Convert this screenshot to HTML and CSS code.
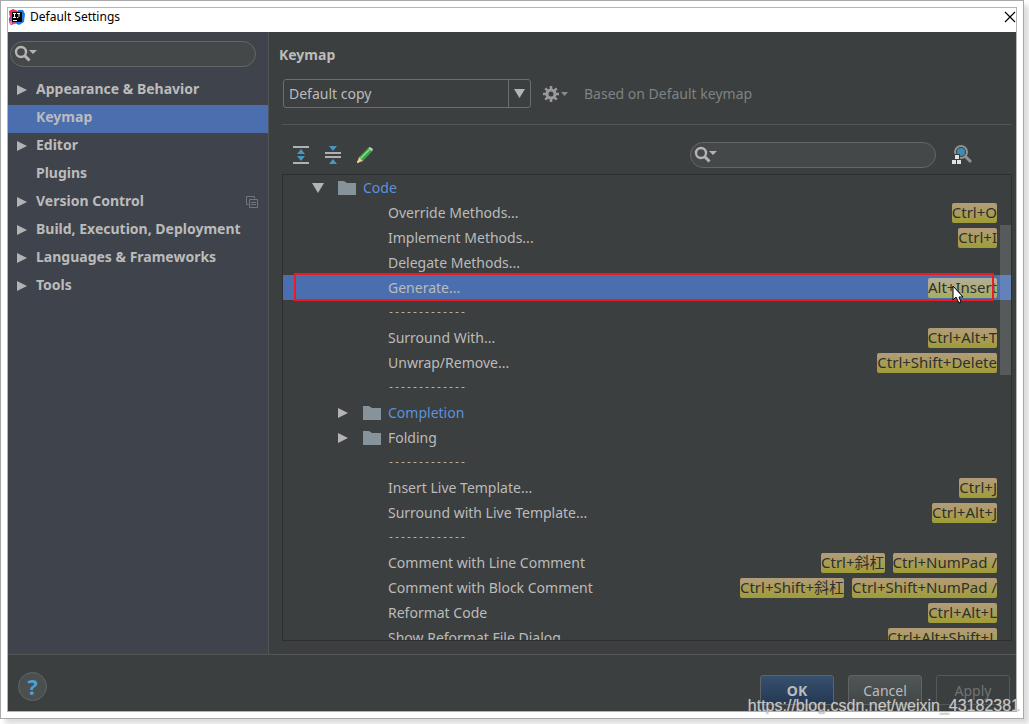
FILE: index.html
```
<!DOCTYPE html>
<html lang="en">
<head>
    <meta charset="UTF-8">
    <title>Default Settings</title>
    <link rel="stylesheet" href="styles.css">
</head>
<body>
    <!-- shared icons -->
    <svg class="sprite" aria-hidden="true">
        <symbol id="right" viewBox="0 0 12 12"><path d="M1 1l10 5-10 5z" fill="#b4b4b4"/></symbol>
        <symbol id="down" viewBox="0 0 12 12"><path d="M0 1h12L6 11z" fill="#b4b4b4"/></symbol>
        <symbol id="folder" viewBox="0 0 18 14"><path d="M0 0h6l3 2h9v12H0z" fill="#87939a"/></symbol>
        <symbol id="magnifier" viewBox="0 0 24 18">
            <circle cx="7" cy="7" r="5" fill="none" stroke="#b4b4b4" stroke-width="2.4"/>
            <path d="M10.5 10.500l5 5" stroke="#b4b4b4" stroke-width="3"/>
            <path d="M15 5h8l-4 4z" fill="#b4b4b4"/>
        </symbol>
    </svg>

    <div class="frame">
        <div class="window">
            <header class="titlebar">
                <svg class="logo" viewBox="0 0 16 16">
                    <path d="M0 2l4-2 5 2-1 12-6 2L0 13l1-4z" fill="#e8315f"/>
                    <path d="M0 9l3-3 2 8-3 2-2-3z" fill="#9a4bc0"/>
                    <path d="M9 1l5 0 2 4-1 8-5 3-4-2z" fill="#1f7ae0"/>
                    <path d="M0 12l3 0v3l-2 0z" fill="#f58a3c"/>
                    <path d="M3 3h10v10H3z" fill="#000"/>
                    <path d="M4 4.500h3M5.500 4.500v4M4 8.500h3M8 4.500h3M10 4.500v3l-1 1H8M4 11.500h4" fill="none" stroke="#fff"/>
                </svg>
                <h1 class="window-title">Default Settings</h1>
                <button class="close" aria-label="Close">
                    <svg viewBox="0 0 12 12"><path d="M1 1l10 10M11 1L1 11" stroke="#000" stroke-width="1.200"/></svg>
                </button>
            </header>

            <div class="panes">
                <nav class="sidebar">
                    <label class="search">
                        <svg><use href="#magnifier"/></svg>
                        <input type="text" aria-label="Search settings">
                    </label>
                    <ul class="sections">
                        <li><a href="#"><svg><use href="#right"/></svg><span>Appearance &amp; Behavior</span></a></li>
                        <li><a href="#" class="current"><svg></svg><span>Keymap</span></a></li>
                        <li><a href="#"><svg><use href="#right"/></svg><span>Editor</span></a></li>
                        <li><a href="#"><svg></svg><span>Plugins</span></a></li>
                        <li><a href="#"><svg><use href="#right"/></svg><span>Version Control</span>
                            <svg class="project" viewBox="0 0 12 12"><path d="M2.500 8.500h-2v-8h8v2M3.500 3.500h8v8h-8zM5 6.500h5M5 8.500h5" fill="none" stroke="#70777b"/></svg></a></li>
                        <li><a href="#"><svg><use href="#right"/></svg><span>Build, Execution, Deployment</span></a></li>
                        <li><a href="#"><svg><use href="#right"/></svg><span>Languages &amp; Frameworks</span></a></li>
                        <li><a href="#"><svg><use href="#right"/></svg><span>Tools</span></a></li>
                    </ul>
                </nav>

                <main class="content">
                    <h2 class="heading">Keymap</h2>
                    <div class="scheme">
                        <div class="combo">
                            <select aria-label="Keymap scheme"><option>Default copy</option></select>
                            <span class="combo-arrow"><svg viewBox="0 0 12 12"><use href="#down"/></svg></span>
                        </div>
                        <button class="gear" aria-label="Scheme actions">
                            <svg viewBox="0 0 26 16">
                                <circle cx="8" cy="8" r="4" fill="none" stroke="#9a9a9a" stroke-width="3"/>
                                <g stroke="#9a9a9a" stroke-width="2.600">
                                    <path d="M8 0v4M8 12v4M0 8h4M12 8h4M2.300 2.300l3 3M10.700 10.700l3 3M2.300 13.700l3-3M10.700 5.300l3-3"/>
                                </g>
                                <path d="M18 6h7l-3.500 4z" fill="#8a8a8a"/>
                            </svg>
                        </button>
                        <span class="hint">Based on Default keymap</span>
                    </div>

                    <div class="toolbar">
                        <button aria-label="Expand all">
                            <svg viewBox="0 0 16 18"><path d="M0 1h16M0 17h16" stroke="#afb1b3" stroke-width="2"/><path d="M8 3l4 5H4zM8 15l4-5H4z" fill="#4a95c4"/></svg>
                        </button>
                        <button aria-label="Collapse all">
                            <svg viewBox="0 0 16 18"><path d="M0 7h16M0 11h16" stroke="#afb1b3" stroke-width="2"/><path d="M4 0h8L8 5zM4 18h8l-4-5z" fill="#4a95c4"/></svg>
                        </button>
                        <button aria-label="Edit shortcut">
                            <svg viewBox="0 0 16 18">
                                <path d="M2 11L11 2l4 3.500L6 15z" fill="#3aa34a"/>
                                <path d="M3 12L12 3l1 1-9 9z" fill="#8fe08a"/>
                                <path d="M11 2l2-1 3 2-1 2.500z" fill="#c5c9c5"/>
                                <path d="M2 11l4 4-6 2z" fill="#f0c98c"/>
                                <path d="M.8 14.500l1.700 1.600L0 17z" fill="#eee"/>
                            </svg>
                        </button>
                        <label class="search search-actions">
                            <svg><use href="#magnifier"/></svg>
                            <input type="text" aria-label="Search actions">
                        </label>
                        <button class="find" aria-label="Find actions by shortcut">
                            <svg viewBox="0 0 20 20">
                                <circle cx="9" cy="7" r="6" fill="none" stroke="#929292" stroke-width="2"/>
                                <path d="M13 11l6 6" stroke="#929292" stroke-width="3"/>
                                <circle cx="9" cy="7" r="4" fill="#3d8ab5"/>
                                <path d="M2 9h6v5h3v6H0v-6h2z" fill="#3b3f3f"/>
                                <path d="M3 10h4v4H3zM0 15h4v4H0zM5 15h4v4H5z" fill="#e0e0e0"/>
                            </svg>
                        </button>
                    </div>

                    <div class="tree">
                        <ul class="actions">
                            <li class="group"><svg class="twist"><use href="#down"/></svg><svg class="folder"><use href="#folder"/></svg><span class="changed">Code</span></li>
                            <li><span>Override Methods...</span><kbd>Ctrl+O</kbd></li>
                            <li><span>Implement Methods...</span><kbd>Ctrl+I</kbd></li>
                            <li><span>Delegate Methods...</span></li>
                            <li class="selected"><span>Generate...</span><kbd>Alt+Insert</kbd>
                                <div class="marker"></div>
                                <svg class="cursor" viewBox="0 0 12 19"><path d="M1 1v14l3-3 3 6 2-1-2-5h4z" fill="#fff" stroke="#000"/></svg>
                            </li>
                            <li class="separator"><span>-------------</span></li>
                            <li><span>Surround With...</span><kbd>Ctrl+Alt+T</kbd></li>
                            <li><span>Unwrap/Remove...</span><kbd>Ctrl+Shift+Delete</kbd></li>
                            <li class="separator"><span>-------------</span></li>
                            <li class="group nested"><svg class="twist"><use href="#right"/></svg><svg class="folder"><use href="#folder"/></svg><span class="changed">Completion</span></li>
                            <li class="group nested"><svg class="twist"><use href="#right"/></svg><svg class="folder"><use href="#folder"/></svg><span>Folding</span></li>
                            <li class="separator"><span>-------------</span></li>
                            <li><span>Insert Live Template...</span><kbd>Ctrl+J</kbd></li>
                            <li><span>Surround with Live Template...</span><kbd>Ctrl+Alt+J</kbd></li>
                            <li class="separator"><span>-------------</span></li>
                            <li><span>Comment with Line Comment</span><kbd>Ctrl+斜杠</kbd><kbd>Ctrl+NumPad /</kbd></li>
                            <li><span>Comment with Block Comment</span><kbd>Ctrl+Shift+斜杠</kbd><kbd>Ctrl+Shift+NumPad /</kbd></li>
                            <li><span>Reformat Code</span><kbd>Ctrl+Alt+L</kbd></li>
                            <li><span>Show Reformat File Dialog</span><kbd>Ctrl+Alt+Shift+L</kbd></li>
                        </ul>
                        <div class="thumb"></div>
                    </div>
                </main>
            </div>

            <footer class="footer">
                <button class="help" aria-label="Help">?</button>
                <button class="btn ok">OK</button>
                <button class="btn">Cancel</button>
                <button class="btn" disabled>Apply</button>
            </footer>
        </div>
        <div class="watermark">https://blog.csdn.net/weixin_43182381</div>
    </div>
</body>
</html>
```
FILE: styles.css
```
* {
    box-sizing: border-box;
}
body {
    margin: 0;
    height: 100vh;
    padding: 0 5px 5px 0;
    background: #fff;
    color: #bbb;
    font-family: "Noto Sans", "Noto Sans CJK SC", sans-serif;
    font-size: 14px;
    overflow: hidden;
}
ul {
    list-style: none;
    margin: 0;
    padding: 0;
}
button {
    padding: 0;
    border: 0;
    background: none;
    font: inherit;
    color: inherit;
}
svg {
    display: block;
    flex: none;
}
.sprite {
    position: absolute;
    width: 0;
    height: 0;
}
.frame {
    position: relative;
    height: 100%;
    padding: 6px;
    border: 1px solid #a9a9a9;
    box-shadow: 5px 5px 5px #ddd;
    background: #fff;
}
.window {
    display: flex;
    flex-direction: column;
    height: 100%;
    border: 1px solid #b4b4b4;
    background: #3b3f3f;
}

/* title bar */
.titlebar {
    display: flex;
    align-items: center;
    gap: 5px;
    height: 24px;
    flex: none;
    padding: 0 0 7px 1px;
    background: #fff;
    color: #000;
}
.logo {
    width: 16px;
    height: 16px;
}
.window-title {
    flex: 1;
    margin: 0;
    font-size: 12px;
    font-weight: normal;
}
.close svg {
    width: 12px;
    height: 12px;
}

.panes {
    display: flex;
    flex: 1;
    min-height: 0;
}

/* left side */
.sidebar {
    width: 261px;
    flex: none;
    padding-top: 9px;
    border-right: 1px solid #515557;
    background: #3f434b;
}
.search {
    display: flex;
    align-items: center;
    width: 246px;
    height: 26px;
    margin-left: 2px;
    padding: 0 8px 0 3px;
    border: 1px solid #646767;
    border-radius: 13px;
    background: #454848;
}
.search svg {
    width: 24px;
    height: 18px;
}
.search input {
    flex: 1;
    min-width: 0;
    border: 0;
    outline: 0;
    background: none;
    color: inherit;
    font: inherit;
}
.sections {
    margin-top: 10px;
    font-weight: bold;
}
.sections a {
    display: flex;
    align-items: center;
    gap: 8px;
    height: 28px;
    padding: 0 10px 2px 8px;
    color: inherit;
    line-height: 18px;
    text-decoration: none;
}
.sections span {
    padding-bottom: 2px;
}
.sections a.current {
    background: #4b6eaf;
}
.sections svg {
    width: 12px;
    height: 12px;
}
.sections .project {
    margin-left: auto;
}

/* right side */
.content {
    display: flex;
    flex-direction: column;
    flex: 1;
    min-width: 0;
    padding: 13px 4px 13px 13px;
}
.heading {
    margin: 0 0 14px -3px;
    font-size: 14px;
    line-height: 20px;
}
.scheme {
    display: flex;
    align-items: center;
    padding: 0 0 16px 1px;
    border-bottom: 1px solid #555;
}
.combo {
    display: flex;
    width: 248px;
    height: 29px;
    border: 1px solid #6b6e6e;
    border-radius: 3px;
}
.combo select {
    flex: 1;
    padding: 0 5px;
    border: 0;
    outline: 0;
    appearance: none;
    background: none;
    color: inherit;
    font: inherit;
}
.combo-arrow {
    display: flex;
    align-items: center;
    justify-content: center;
    width: 22px;
    border-left: 1px solid #6b6e6e;
}
.combo-arrow svg {
    width: 11px;
    height: 11px;
}
.gear svg {
    width: 26px;
    height: 16px;
    margin: 0 15px 0 12px;
}
.hint {
    color: #808383;
}
.toolbar {
    display: flex;
    align-items: center;
    gap: 16px;
    height: 49px;
    padding: 10px 40px 0 11px;
}
.toolbar button svg {
    width: 16px;
    height: 18px;
}
.toolbar .search-actions {
    margin-left: auto;
}
.toolbar .find svg {
    width: 20px;
    height: 20px;
}

/* action list */
.tree {
    position: relative;
    flex: 1;
    min-height: 0;
    border: 1px solid #2d2f30;
    overflow: hidden;
}
.actions li {
    display: flex;
    align-items: center;
    position: relative;
    height: 25px;
    padding: 0 14px 0 105px;
}
.actions li span {
    margin-right: auto;
}
.actions .group {
    gap: 7px;
    padding-left: 29px;
}
.actions .nested {
    padding-left: 54px;
}
.actions .separator {
    font-family: "Liberation Mono", monospace;
    font-size: 10px;
}
.actions .selected {
    background: #4b6eaf;
}
.changed {
    color: #5c92dc;
}
.twist {
    width: 12px;
    height: 12px;
}
.folder {
    width: 18px;
    height: 14px;
    margin-left: 7px;
}
kbd {
    height: 20px;
    margin-left: 8px;
    border-radius: 2px;
    background: linear-gradient(#b39c7c, #a09c36);
    color: #2f3030;
    font-family: inherit;
    font-size: 15px;
    line-height: 18px;
}
.selected kbd {
    background: linear-gradient(#b5ad9c, #a5ae5c);
}
.marker {
    position: absolute;
    inset: -2px 17px -1px 11px;
    border: 2px solid #ed1c24;
}
.cursor {
    position: absolute;
    right: 47px;
    top: 10px;
    width: 12px;
    height: 19px;
    z-index: 1;
}
.thumb {
    position: absolute;
    top: 50px;
    right: 0;
    width: 11px;
    height: 150px;
    background: rgba(255, 255, 255, 0.14);
}

/* bottom buttons */
.footer {
    display: flex;
    align-items: center;
    gap: 14px;
    height: 57px;
    flex: none;
    padding: 14px 6px 0 10px;
    border-top: 1px solid #555;
}
.help {
    width: 29px;
    height: 29px;
    margin: 0 auto 8px 0;
    border: 1px solid #616565;
    border-radius: 50%;
    background: #4a4f4f;
    color: #4f9fcf;
    font-size: 22px;
    font-weight: bold;
    line-height: 26px;
}
.btn {
    width: 74px;
    height: 30px;
    border: 1px solid #5f6464;
    border-radius: 3px;
    background: linear-gradient(#505656, #414646);
}
.btn.ok {
    background: linear-gradient(#37506f, #243852);
    font-weight: bold;
}
.btn:disabled {
    border-color: #555859;
    background: none;
    color: #707373;
}
.watermark {
    position: absolute;
    right: 3px;
    bottom: 3px;
    color: rgba(225, 225, 225, 0.8);
    font-family: "Liberation Sans", Arial, sans-serif;
    font-size: 16px;
    text-shadow: 0 0 1px #777;
}
```
